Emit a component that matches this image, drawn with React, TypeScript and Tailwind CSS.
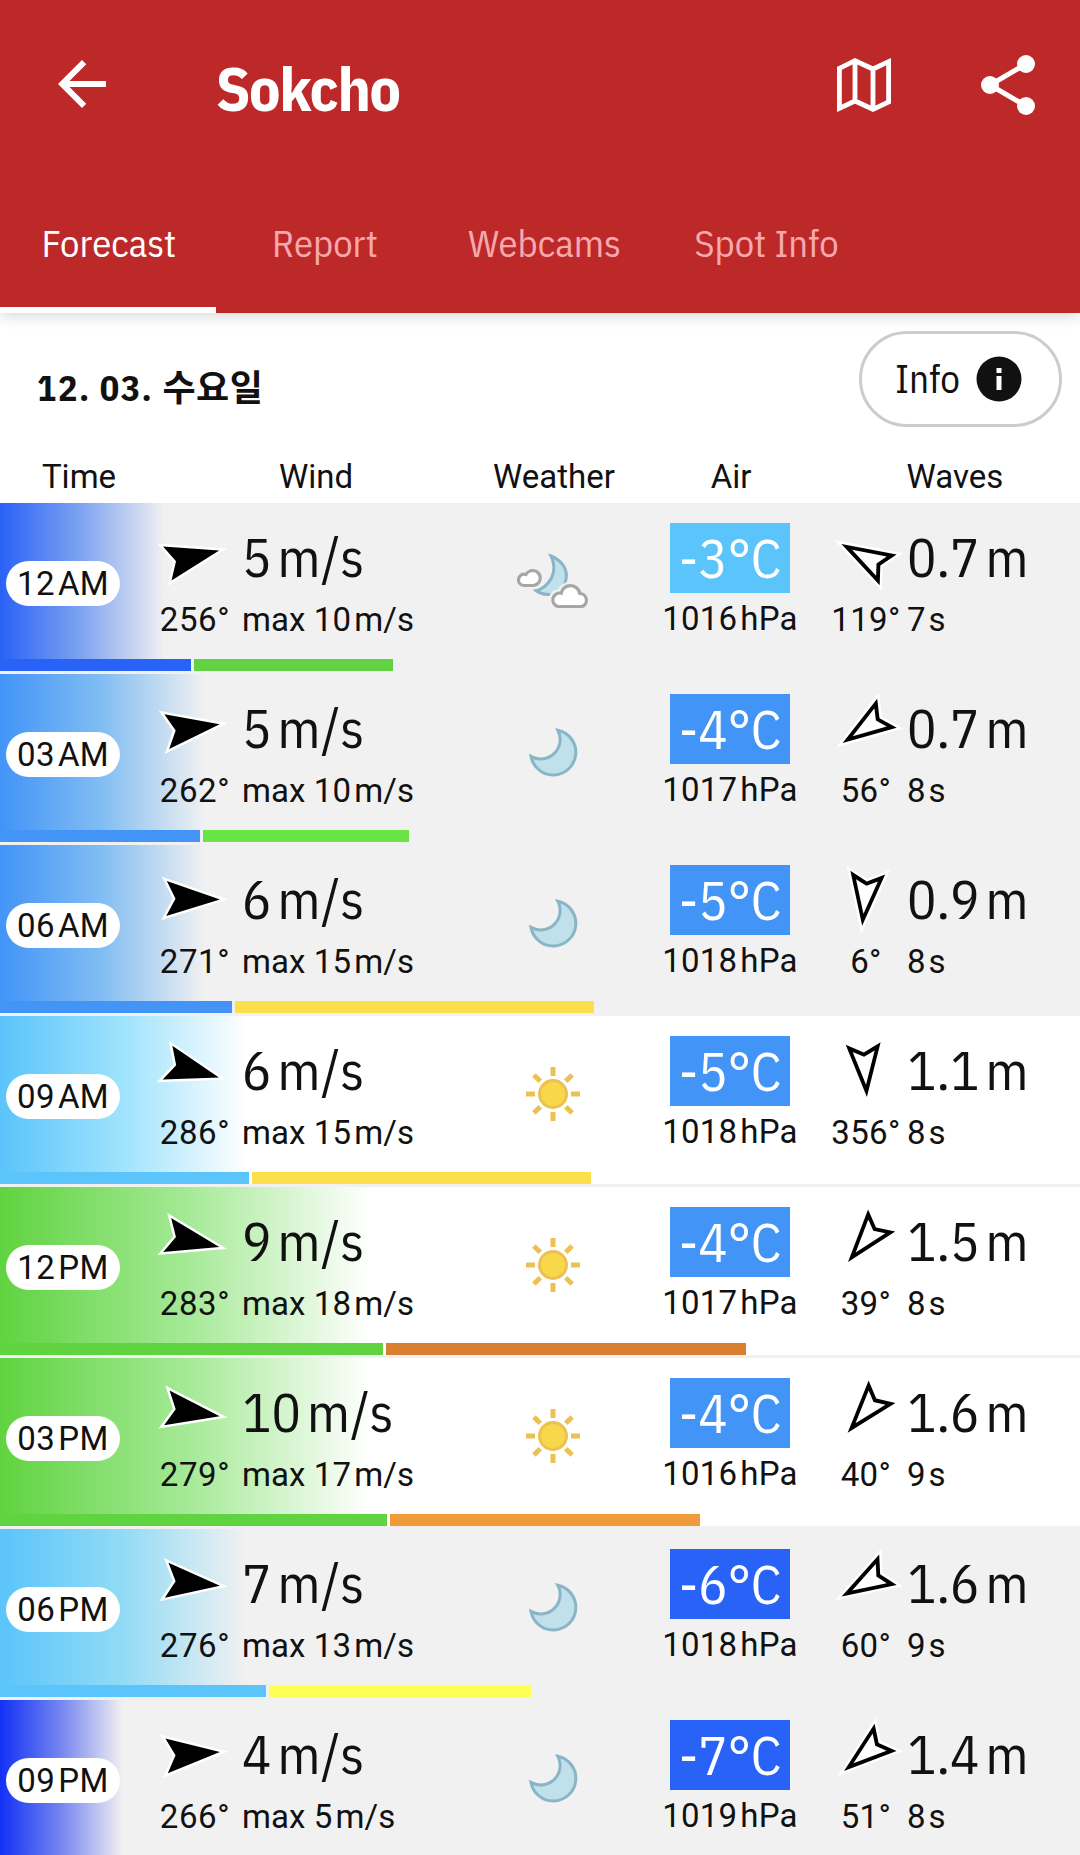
import clsx from 'clsx';

type WeatherKind = 'moon' | 'moon-cloud' | 'sun';

interface ForecastRow {
  hour: string;
  period: 'AM' | 'PM';
  night: boolean;
  wind: number;
  windDir: number;
  gust: number;
  color: string;
  midColor: string;
  fade: number;
  bar: number;
  gustBar: number;
  gustColor: string;
  weather: WeatherKind;
  air: number;
  airColor: string;
  pressure: number;
  wave: string;
  waveDir: number;
  wavePeriod: number;
}

const rows: ForecastRow[] = [
  { hour: '12', period: 'AM', night: true, wind: 5, windDir: 256, gust: 10, color: '#2962f6', midColor: '#7fa4f0', fade: 165, bar: 191, gustBar: 199, gustColor: '#62d242', weather: 'moon-cloud', air: -3, airColor: '#5bc4fa', pressure: 1016, wave: '0.7', waveDir: 119, wavePeriod: 7 },
  { hour: '03', period: 'AM', night: true, wind: 5, windDir: 262, gust: 10, color: '#4294f7', midColor: '#82bdf3', fade: 205, bar: 200, gustBar: 206, gustColor: '#68e544', weather: 'moon', air: -4, airColor: '#4294f7', pressure: 1017, wave: '0.7', waveDir: 56, wavePeriod: 8 },
  { hour: '06', period: 'AM', night: true, wind: 6, windDir: 271, gust: 15, color: '#4294f7', midColor: '#82bdf3', fade: 205, bar: 232, gustBar: 359, gustColor: '#fae04b', weather: 'moon', air: -5, airColor: '#4294f7', pressure: 1018, wave: '0.9', waveDir: 6, wavePeriod: 8 },
  { hour: '09', period: 'AM', night: false, wind: 6, windDir: 286, gust: 15, color: '#5bc4fa', midColor: '#9fe3fd', fade: 246, bar: 249, gustBar: 339, gustColor: '#fae04b', weather: 'sun', air: -5, airColor: '#4294f7', pressure: 1018, wave: '1.1', waveDir: 356, wavePeriod: 8 },
  { hour: '12', period: 'PM', night: false, wind: 9, windDir: 283, gust: 18, color: '#60d340', midColor: '#a4e995', fade: 370, bar: 383, gustBar: 360, gustColor: '#d8802f', weather: 'sun', air: -4, airColor: '#4294f7', pressure: 1017, wave: '1.5', waveDir: 39, wavePeriod: 8 },
  { hour: '03', period: 'PM', night: false, wind: 10, windDir: 279, gust: 17, color: '#60d340', midColor: '#a4e995', fade: 370, bar: 387, gustBar: 310, gustColor: '#ef9b38', weather: 'sun', air: -4, airColor: '#4294f7', pressure: 1016, wave: '1.6', waveDir: 40, wavePeriod: 9 },
  { hour: '06', period: 'PM', night: true, wind: 7, windDir: 276, gust: 13, color: '#5bc4fa', midColor: '#92dbf6', fade: 246, bar: 266, gustBar: 262, gustColor: '#fffe54', weather: 'moon', air: -6, airColor: '#2962f6', pressure: 1018, wave: '1.6', waveDir: 60, wavePeriod: 9 },
  { hour: '09', period: 'PM', night: true, wind: 4, windDir: 266, gust: 5, color: '#1231f5', midColor: '#7686ef', fade: 123, bar: 150, gustBar: 60, gustColor: '#4294f7', weather: 'moon', air: -7, airColor: '#2962f6', pressure: 1019, wave: '1.4', waveDir: 51, wavePeriod: 8 },
];

const tabs = [
  { label: 'Forecast', width: 'w-[216px]' },
  { label: 'Report', width: 'w-[216px]' },
  { label: 'Webcams', width: 'w-[223px]' },
  { label: 'Spot Info', width: 'w-[221px]' },
];

const plex = "font-['IBM_Plex_Sans_Condensed','Roboto_Condensed','Roboto',sans-serif]";

function DirectionArrow({ degrees, outline = false }: { degrees: number; outline?: boolean }) {
  return (
    <svg width="78" height="78" viewBox="-39 -39 78 78" className="shrink-0">
      <g transform={`rotate(${degrees + 180})`}>
        <path d="M0-27 17.5 26.5 0 17.5-17.5 26.5Z" fill="#fff" stroke="#fff" strokeWidth="5" strokeMiterlimit="10" />
        <path d="M0-27 17.5 26.5 0 17.5-17.5 26.5Z" fill="#000" />
        {outline && <path d="M0-14.8 11 18.8 0 13.2-11 18.8Z" fill="#fff" />}
      </g>
    </svg>
  );
}

function WeatherIcon({ kind }: { kind: WeatherKind }) {
  if (kind === 'sun') {
    return (
      <svg width="60" height="60" viewBox="-30 -30 60 60">
        <circle r="13.5" fill="#f9d74a" stroke="#ecc052" strokeWidth="3" />
        {[0, 45, 90, 135, 180, 225, 270, 315].map((angle) => (
          <path key={angle} d="M0-18V-27" stroke="#ecc052" strokeWidth="5" transform={`rotate(${angle})`} />
        ))}
      </svg>
    );
  }
  if (kind === 'moon-cloud') {
    const small = 'M1.5 34.5H9.5A7.5 7.5 0 0 0 10 19.5C6.5 19.5 4.5 21 3 23.5C-1 22-4.5 25-4.5 29C-4.5 32-2 34.5 1.5 34.5Z';
    const big = 'M35 55.5H59A6.7 6.7 0 0 0 56.8 42.5A9.4 9 0 0 0 38.2 42.2A6.7 6.7 0 0 0 35 55.5Z';
    return (
      <svg width="80" height="60" viewBox="-10 0 80 60">
        <path d="M28 5C38 9 44 17 43.3 26C42.5 37 34 44 25 43.5C20 43.2 15.5 41.5 13 39.5C19 38.5 25 33 28.5 27C32 19.5 31 11 28 5Z" fill="#c0e0ec" stroke="#8ab5c7" strokeWidth="3" />
        {[small, big].map((d) => (
          <g key={d}>
            <path d={d} fill="none" stroke="#f1f1f1" strokeWidth="8" />
            <path d={d} fill="#fff" stroke="#a6a6a6" strokeWidth="3.2" />
          </g>
        ))}
      </svg>
    );
  }
  return (
    <svg width="60" height="60" viewBox="0 0 60 60">
      <path d="M34.8 8.2A22.6 22.6 0 1 1 8 34.4A19.5 19.5 0 0 0 34.8 8.2Z" fill="#c0e0ec" stroke="#8ab5c7" strokeWidth="3" />
    </svg>
  );
}

function Header() {
  return (
    <header className={clsx(plex, 'relative z-10 h-[313px] bg-[#bd2829] text-white shadow-[0_2px_14px_rgba(0,0,0,0.18)]')}>
      <div className="flex h-[180px] items-start pl-[46px] pr-[45px]">
        <svg width="72" height="72" viewBox="0 0 24 24" fill="currentColor" className="mt-12">
          <path d="M20 11H7.83l5.59-5.59L12 4l-8 8 8 8 1.41-1.41L7.83 13H20z" />
        </svg>
        <h1 className="ml-[98px] mt-[48px] text-[62px] leading-[80px] font-bold tracking-[-1.4px]">Sokcho</h1>
        <svg width="54" height="54" viewBox="0 0 54 54" fill="none" stroke="currentColor" strokeWidth="4.8" className="ml-auto mt-[58px]">
          <path d="M2.4 10.3 18 2.7 36 11 51.6 3.7V44L36 51.3 18 43 2.4 50.3ZM18 2.7V43M36 11V51.3" />
        </svg>
        <svg width="54" height="60" viewBox="0 0 54 60" fill="currentColor" className="ml-[90px] mt-[55px]">
          <path d="M45 9 9 30 45 51" fill="none" stroke="currentColor" strokeWidth="5" />
          <circle cx="9" cy="30" r="9" />
          <circle cx="45" cy="9" r="9" />
          <circle cx="45" cy="51" r="9" />
        </svg>
      </div>
      <nav className="flex h-[133px]">
        {tabs.map((tab, i) => (
          <button
            key={tab.label}
            className={clsx(
              tab.width,
              'border-b-[6px] pl-[2px] text-center text-[38.5px] leading-none',
              i === 0 ? 'border-white text-white' : 'border-transparent text-[#f7a8ae]',
            )}
          >
            <span className="block -mt-px">{tab.label}</span>
          </button>
        ))}
      </nav>
    </header>
  );
}

function ForecastItem({ row }: { row: ForecastRow }) {
  const background = row.night ? '#f1f1f1' : '#ffffff';

  return (
    <li className={clsx('h-[171px] shrink-0 border-b-[3px] border-[#f1f1f1]', row.night ? 'bg-[#f1f1f1]' : 'bg-white')}>
      <div
        className="flex h-[156px]"
        style={{ backgroundImage: `linear-gradient(to right, ${row.color}, ${row.midColor} ${row.fade / 2}px, ${background} ${row.fade}px)` }}
      >
        <div className="w-[158px] pl-[6px] pt-[58px]">
          <div className="flex h-[45px] w-[114px] items-center justify-center gap-[3px] rounded-full bg-white text-[33px] leading-none tracking-[0.4px]">
            <span>{row.hour}</span>
            <span>{row.period}</span>
          </div>
        </div>

        <div className="flex w-[70px] flex-col items-center pt-[15px]">
          <DirectionArrow degrees={row.windDir} />
          <span className="mt-1 ml-1 text-[33px] leading-10 tracking-[0.6px]">{row.windDir}°</span>
        </div>
        <div className="w-[260px] pl-[14px] pt-[15px] whitespace-nowrap">
          <div className={clsx(plex, 'text-[54.5px] leading-[78px]')}>
            {row.wind}
            <span className="ml-[6px] tracking-[0.6px]">m/s</span>
          </div>
          <div className="mt-1 text-[33px] leading-10 tracking-[0.1px]">
            max {row.gust}
            <span className="ml-[3px]">m/s</span>
          </div>
        </div>

        <div className="flex w-[130px] items-center justify-center">
          <WeatherIcon kind={row.weather} />
        </div>

        <div className="ml-[45px] flex w-[134px] flex-col items-center pt-5 whitespace-nowrap">
          <div
            className={clsx(plex, 'h-[70px] w-[120px] text-center text-[54.5px] leading-[69px] text-white')}
            style={{ backgroundColor: row.airColor }}
          >
            {row.air}°C
          </div>
          <div className="mt-[6px] text-[33px] leading-10 tracking-[0.2px]">
            {row.pressure}
            <span className="ml-[3px]">hPa</span>
          </div>
        </div>

        <div className="ml-[33px] flex w-[70px] flex-col items-center pt-[15px]">
          <DirectionArrow degrees={row.waveDir} outline />
          <span className="mt-1 ml-[2px] text-[33px] leading-10 tracking-[0.4px]">{row.waveDir}°</span>
        </div>
        <div className="pl-[7px] pt-[15px] whitespace-nowrap">
          <div className={clsx(plex, 'text-[54.5px] leading-[78px]')}>
            {row.wave}
            <span className="ml-[6px]">m</span>
          </div>
          <div className="mt-1 text-[33px] leading-10">
            {row.wavePeriod}
            <span className="ml-[3px]">s</span>
          </div>
        </div>
      </div>

      <div className="flex h-3 gap-[3px]">
        <div style={{ width: row.bar, backgroundColor: row.color }} />
        <div style={{ width: row.gustBar, backgroundColor: row.gustColor }} />
      </div>
    </li>
  );
}

export default function App() {
  return (
    <div className="h-[1855px] w-[1080px] overflow-hidden bg-white font-['Roboto','Noto_Sans_CJK_KR',sans-serif] text-[#111]">
      <Header />

      <section className="flex h-[127px] justify-between pl-[37px] pr-[18px] pt-[18px]">
        <h2 className="mt-[33px] font-['IBM_Plex_Sans_Condensed','Noto_Sans_CJK_KR',sans-serif] text-[36px] leading-[48px] font-bold tracking-[1.5px]">
          12. 03. <span className="tracking-[0.5px]">수요일</span>
        </h2>
        <button className={clsx(plex, 'flex h-24 w-[203px] items-center justify-center gap-4 rounded-full border-[3px] border-[#ccc] pr-[4px] text-[39px]')}>
          Info
          <svg width="46" height="46" viewBox="0 0 46 46">
            <circle cx="23" cy="23" r="22.5" fill="#111" />
            <path d="M20.5 12h5v5h-5zM20.5 20h5v14h-5z" fill="#fff" />
          </svg>
        </button>
      </section>

      <div className="flex h-[63px] items-center pt-[10px] text-center text-[33px] leading-none">
        <span className="w-[158px]">Time</span>
        <span className="w-[316px]">Wind</span>
        <span className="w-[160px]">Weather</span>
        <span className="w-[194px]">Air</span>
        <span className="flex-1 pl-[2px]">Waves</span>
      </div>

      <ul className="flex flex-col">
        {rows.map((row) => (
          <ForecastItem key={`${row.hour}${row.period}`} row={row} />
        ))}
      </ul>
    </div>
  );
}
